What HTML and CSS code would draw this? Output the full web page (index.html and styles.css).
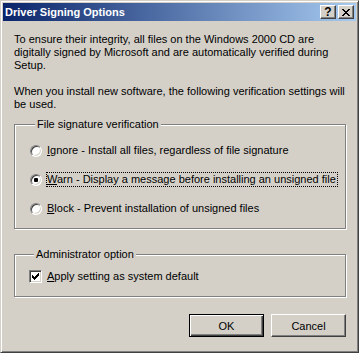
FILE: index.html
```html
<!DOCTYPE html>
<html lang="en">
<head>
    <meta charset="UTF-8">
    <title>Driver Signing Options</title>
    <link rel="stylesheet" href="styles.css">
</head>
<body>
    <div class="window">
        <div class="titlebar">
            <span class="title">Driver Signing Options</span>
            <div class="caption-buttons">
                <button class="cap-btn help">?</button>
                <button class="cap-btn close">
                    <svg width="8" height="7" viewBox="0 0 8 7" shape-rendering="crispEdges">
                        <path d="M0 0h2v1h-2zM6 0h2v1h-2zM1 1h2v1h-2zM5 1h2v1h-2zM2 2h4v1h-4zM3 3h2v1h-2zM2 4h4v1h-4zM1 5h2v1h-2zM5 5h2v1h-2zM0 6h2v1h-2zM6 6h2v1h-2z" fill="#000"/>
                    </svg>
                </button>
            </div>
        </div>

        <div class="client">
            <p>To ensure their integrity, all files on the Windows 2000 CD are<br>
               digitally signed by Microsoft and are automatically verified during<br>
               Setup.</p>
            <p>When you install new software, the following verification settings will<br>
               be used.</p>

            <div class="group group-sig">
                <div class="legend">File signature verification</div>
                <div class="option">
                    <span class="radio"></span>
                    <span class="label"><u>I</u>gnore - Install all files, regardless of file signature</span>
                </div>
                <div class="option">
                    <span class="radio checked"></span>
                    <span class="label focused"><u>W</u>arn - Display a message before installing an unsigned file</span>
                </div>
                <div class="option">
                    <span class="radio"></span>
                    <span class="label"><u>B</u>lock - Prevent installation of unsigned files</span>
                </div>
            </div>

            <div class="group group-admin">
                <div class="legend">Administrator option</div>
                <div class="option">
                    <span class="checkbox">
                        <svg width="7" height="7" viewBox="0 0 7 7" shape-rendering="crispEdges">
                            <path d="M6 0h1v1h-1zM5 1h2v1h-2zM0 2h1v1h-1zM4 2h3v1h-3zM0 3h2v1h-2zM3 3h3v1h-3zM0 4h5v1h-5zM1 5h3v1h-3zM2 6h1v1h-1z" fill="#000"/>
                        </svg>
                    </span>
                    <span class="label"><u>A</u>pply setting as system default</span>
                </div>
            </div>

            <div class="buttons">
                <button class="btn default">OK</button>
                <button class="btn">Cancel</button>
            </div>
        </div>
    </div>
</body>
</html>
```

FILE: styles.css
```css
body {
    margin: 0;
    background-color: #d4d0c8;
    font-family: "Liberation Sans", Arial, sans-serif;
    font-size: 11px;
    color: #000;
}
.window {
    width: 359px;
    height: 353px;
    box-sizing: border-box;
    border: 1px solid;
    border-color: #d4d0c8 #404040 #404040 #d4d0c8;
    box-shadow: inset 1px 1px #fff, inset -1px -1px #808080;
    padding: 2px;
    background-color: #d4d0c8;
}
.titlebar {
    height: 18px;
    display: flex;
    align-items: center;
    justify-content: space-between;
    padding: 0 2px;
    background: linear-gradient(to right, #0a246a, #a6caf0);
}
.title {
    color: #fff;
    font-weight: bold;
    font-size: 11px;
}
.caption-buttons {
    display: flex;
    gap: 2px;
}
.cap-btn {
    width: 16px;
    height: 14px;
    padding: 0;
    box-sizing: border-box;
    background-color: #d4d0c8;
    border: 1px solid;
    border-color: #fff #404040 #404040 #fff;
    box-shadow: inset -1px -1px #808080;
    display: flex;
    align-items: center;
    justify-content: center;
    font-family: "Liberation Sans", Arial, sans-serif;
    font-weight: bold;
    font-size: 12px;
    line-height: 12px;
    color: #000;
}
.client {
    padding: 12px 10px 0 11px;
}
p {
    margin: 0 0 13px;
    line-height: 13px;
    white-space: nowrap;
}
.group {
    border: 1px solid #808080;
    box-shadow: inset 1px 1px #fff, 1px 1px #fff;
}
.legend {
    display: table;
    margin: -7px 0 0 5px;
    padding: 0 2px;
    line-height: 13px;
    background-color: #d4d0c8;
}
.group-sig {
    margin-top: 1px;
    height: 103px;
    padding-left: 15px;
}
.group-sig .option {
    margin-top: 12px;
}
.group-sig .legend + .option {
    margin-top: 12px;
}
.group-sig .option + .option {
    margin-top: 14px;
}
.group-admin {
    margin-top: 25px;
    height: 41px;
    padding-left: 14px;
}
.group-admin .option {
    margin-top: 8px;
}
.option {
    display: flex;
    align-items: center;
    height: 15px;
}
.label {
    border: 1px dotted transparent;
    padding: 0 1px 0 0;
    line-height: 13px;
    white-space: nowrap;
}
.label.focused {
    border-color: #000;
}
.radio {
    width: 12px;
    height: 12px;
    box-sizing: border-box;
    border-radius: 50%;
    border: 1px solid;
    border-color: #808080 #fff #fff #808080;
    box-shadow: inset 1px 1px #404040, inset -1px -1px #d4d0c8;
    background-color: #fff;
    margin-right: 4px;
    display: flex;
    align-items: center;
    justify-content: center;
}
.radio.checked::after {
    content: "";
    width: 4px;
    height: 4px;
    border-radius: 1px;
    background-color: #000;
}
.checkbox {
    width: 13px;
    height: 13px;
    box-sizing: border-box;
    border: 1px solid;
    border-color: #808080 #fff #fff #808080;
    box-shadow: inset 1px 1px #404040, inset -1px -1px #d4d0c8;
    background-color: #fff;
    margin-right: 4px;
    display: flex;
    align-items: center;
    justify-content: center;
}
.buttons {
    display: flex;
    justify-content: flex-end;
    gap: 7px;
    margin-top: 17px;
    padding-right: 0;
}
.btn {
    width: 75px;
    height: 23px;
    box-sizing: border-box;
    padding: 0;
    background-color: #d4d0c8;
    border: 1px solid;
    border-color: #fff #404040 #404040 #fff;
    box-shadow: inset -1px -1px #808080;
    font-family: "Liberation Sans", Arial, sans-serif;
    font-size: 11px;
    color: #000;
}
.btn.default {
    border-color: #000;
    box-shadow: inset 1px 1px #fff, inset -1px -1px #404040, inset -2px -2px #808080;
}
```
